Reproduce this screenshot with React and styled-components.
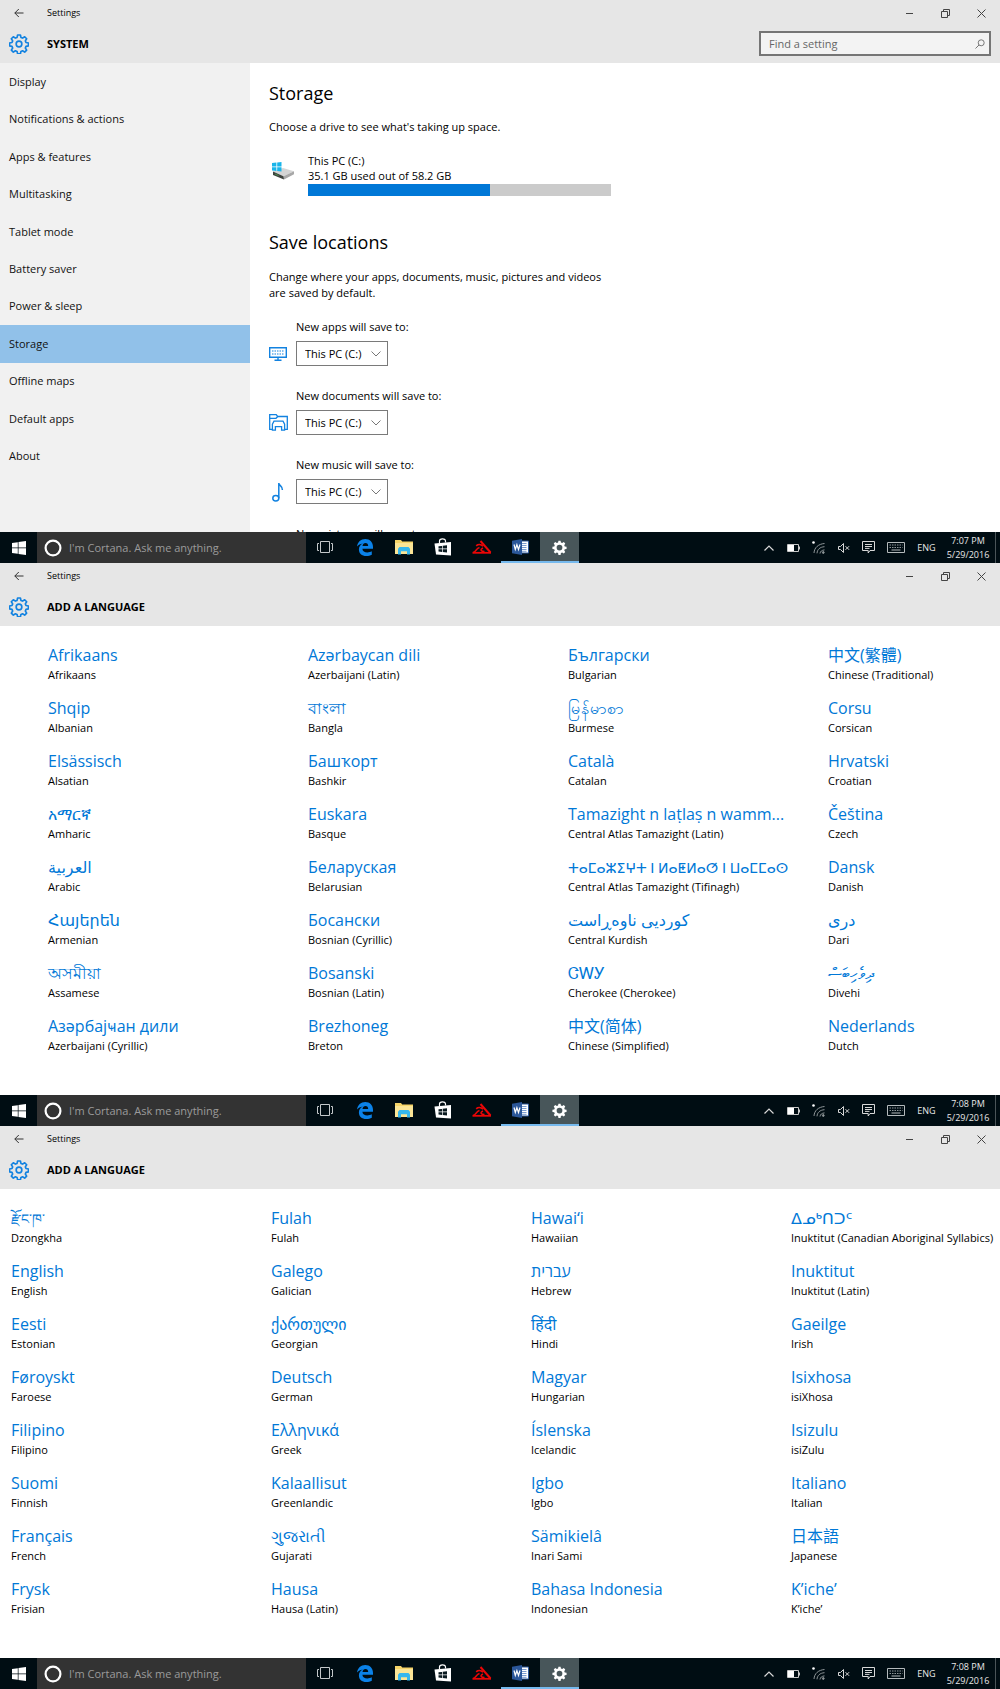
import React from "react";
import styled, { createGlobalStyle } from "styled-components";

const GlobalStyle = createGlobalStyle`
  * {
    box-sizing: border-box;
  }
  body {
    margin: 0;
    font-family: "Open Sans", "Noto Sans", "DejaVu Sans", "Noto Sans CJK SC", sans-serif;
    font-size: 11px;
    line-height: 16px;
    color: #000;
    background: #fff;
  }
  button, input, select {
    font: inherit;
    color: inherit;
    border: none;
    border-radius: 0;
    background: none;
    padding: 0;
    margin: 0;
  }
  svg {
    display: block;
    flex: none;
  }
`;

const Page = styled.div`
  display: grid;
  grid-template-rows: repeat(3, minmax(0, 1fr));
  height: 100vh;
  min-height: 1500px;
`;
const Screen = styled.section`
  display: flex;
  flex-direction: column;
  min-height: 0;
  overflow: hidden;
`;
const Header = styled.header`
  flex: none;
  background: #e6e6e6;
`;
const TitleBar = styled.div`
  display: flex;
  align-items: center;
  height: 26px;
  padding-right: 1px;
  font-size: 9px;
`;
const BackButton = styled.button`
  display: flex;
  justify-content: center;
  width: 37px;
  margin-right: 10px;
`;
const WindowButtons = styled.div`
  display: flex;
  margin-left: auto;
`;
const WindowButton = styled.button`
  display: flex;
  justify-content: center;
  align-items: center;
  width: 36px;
  height: 26px;
`;
const SectionBar = styled.div`
  display: flex;
  align-items: center;
  height: 37px;
  padding: 0 9px 2px;
`;
const SectionTitle = styled.h1`
  margin: 0 0 0 18px;
  font-size: 11px;
  font-weight: 700;
  color: #000;
`;
const SearchBox = styled.label`
  display: flex;
  align-items: center;
  width: 232px;
  height: 25px;
  margin-left: auto;
  padding: 0 4px 0 8px;
  border: 2px solid #757575;
  background: #f3f3f3;
`;
const SearchInput = styled.input`
  flex: 1;
  min-width: 0;
  outline: none;
  &::placeholder {
    color: #666;
    opacity: 1;
  }
`;
const Body = styled.div`
  display: flex;
  flex: 1;
  min-height: 0;
  overflow: hidden;
`;
const Sidebar = styled.nav`
  width: 25%;
  background: #f1f1f1;
`;
const NavList = styled.ul`
  display: grid;
  grid-auto-rows: 1fr;
  height: 412px;
  margin: 0;
  padding: 0;
  list-style: none;
`;
const NavLink = styled.a`
  display: flex;
  align-items: center;
  height: 100%;
  padding: 0 9px;
  color: #111;
  text-decoration: none;
  background: ${(props) => (props.$active ? "#91c1e9" : "transparent")};
`;
const Content = styled.main`
  flex: 1;
  padding: 16px 19px 0;
`;
const Heading = styled.h2`
  margin: 0;
  font-size: 18px;
  font-weight: 400;
  line-height: 28px;
`;
const Intro = styled.p`
  max-width: 350px;
  margin: ${(props) => (props.$wide ? "13px 0 18px" : "12px 0 18px")};
`;
const Drive = styled.div`
  display: flex;
  gap: 14px;
  margin-bottom: 32px;
  padding-left: 3px;
  line-height: 15px;
`;
const DriveIcon = styled.div`
  padding-top: 8px;
`;
const DriveInfo = styled.div`
  flex: 1;
  max-width: 303px;
`;
const Meter = styled.div`
  height: 12px;
  margin-top: 1px;
  background: #cbcbcb;
`;
const MeterFill = styled.div`
  height: 100%;
  background: #0078d7;
`;
const Field = styled.div`
  display: grid;
  grid-template-columns: 27px auto;
  justify-content: start;
  align-items: center;
  row-gap: 6px;
  margin-bottom: 22px;
`;
const FieldLabel = styled.label`
  grid-column: 2;
`;
const SelectWrap = styled.div`
  display: grid;
  align-items: center;
  width: 92px;
  svg {
    grid-area: 1 / 1;
    justify-self: end;
    margin-right: 7px;
    pointer-events: none;
  }
`;
const Select = styled.select`
  grid-area: 1 / 1;
  appearance: none;
  width: 100%;
  height: 25px;
  padding: 0 20px 0 8px;
  border: 1px solid #7a7a7a;
  background: #fff;
`;
const Languages = styled.main`
  flex: 1;
  min-height: 0;
  overflow: hidden;
  padding: 18px 0 0 ${(props) => props.$inset}px;
`;
const LanguageGrid = styled.div`
  display: grid;
  grid-template-columns: repeat(4, 26vw);
  grid-template-rows: repeat(8, 39px);
  grid-auto-flow: column;
  row-gap: 14px;
`;
const Language = styled.a`
  color: #000;
  text-decoration: none;
  white-space: nowrap;
`;
const NativeName = styled.div`
  height: 23px;
  font-size: ${(props) => (props.$wideScript ? 14 : 16)}px;
  line-height: 23px;
  color: #0078d7;
`;
const Taskbar = styled.footer`
  display: flex;
  flex: none;
  height: 31px;
  background: #000d13;
  color: #e8e8e8;
`;
const StartButton = styled.button`
  display: flex;
  justify-content: center;
  align-items: center;
  width: 37px;
`;
const Cortana = styled.label`
  display: flex;
  align-items: center;
  gap: 7px;
  width: 269px;
  padding-left: 7px;
  background: #333;
`;
const CortanaInput = styled.input`
  flex: 1;
  min-width: 0;
  outline: none;
  &::placeholder {
    color: #9b9b9b;
    opacity: 1;
  }
`;
const TaskButton = styled.button`
  display: flex;
  justify-content: center;
  align-items: center;
  width: 39px;
  border-bottom: 2px solid ${(props) => (props.$open ? "#76b9ed" : "transparent")};
  padding-top: 1px;
  background: ${(props) => (props.$active ? "#48565a" : "none")};
`;
const Tray = styled.div`
  display: flex;
  margin-left: auto;
`;
const TrayButton = styled.button`
  display: flex;
  justify-content: center;
  align-items: center;
  width: ${(props) => props.$width || 25}px;
  font-size: 9px;
`;
const Clock = styled.time`
  width: 52px;
  padding-top: 2px;
  font-size: 9px;
  line-height: 14px;
  text-align: center;
`;
const ShowDesktop = styled.button`
  width: 5px;
  margin-left: 1px;
  border-left: 1px solid #4a5458;
`;

// ---- icons ----

const GEAR =
  "M10.3 1.2h3.4l.6 2.9 2 .8 2.5-1.6 2.4 2.4-1.6 2.5.8 2 2.9.6v3.4l-2.9.6-.8 2 1.6 2.5-2.4 2.4-2.5-1.6-2 .8-.6 2.9h-3.4l-.6-2.9-2-.8-2.5 1.6-2.4-2.4 1.6-2.5-.8-2-2.9-.6v-3.4l2.9-.6.8-2L2.8 5.7l2.4-2.4 2.5 1.6 2-.8z";

const GearOutline = () => (
  <svg width="20" height="20" viewBox="0 0 24 24" fill="none" stroke="#1282e0" strokeWidth="2" strokeLinejoin="round">
    <path d={GEAR} />
    <circle cx="12" cy="12" r="3.4" />
  </svg>
);

const GearSolid = () => (
  <svg width="15" height="15" viewBox="0 0 24 24" fill="#fff">
    <path fillRule="evenodd" d={GEAR + "M12 7.4a4.6 4.6 0 1 0 0 9.2 4.6 4.6 0 0 0 0-9.2z"} />
  </svg>
);

const BackIcon = () => (
  <svg width="10" height="10" viewBox="0 0 10 10" fill="none" stroke="#333">
    <path d="M9.5 5H.8M4.8 1 .8 5l4 4" />
  </svg>
);

const MinimizeIcon = () => (
  <svg width="9" height="9" viewBox="0 0 9 9" fill="none" stroke="#444">
    <path d="M1 4.5h7" />
  </svg>
);

const RestoreIcon = () => (
  <svg width="9" height="9" viewBox="0 0 9 9" fill="none" stroke="#444">
    <path d="M.5 2.5h6v6h-6zM2.5 2.5v-2h6v6h-2" />
  </svg>
);

const CloseIcon = () => (
  <svg width="9" height="9" viewBox="0 0 9 9" fill="none" stroke="#444">
    <path d="M.5.5l8 8M8.5.5l-8 8" />
  </svg>
);

const SearchIcon = () => (
  <svg width="10" height="10" viewBox="0 0 10 10" fill="none" stroke="#777">
    <circle cx="6.2" cy="3.8" r="3" />
    <path d="M4 6 .5 9.5" />
  </svg>
);

const ChevronIcon = () => (
  <svg width="10" height="6" viewBox="0 0 10 6" fill="none" stroke="#777">
    <path d="M.5.5 5 5 9.5.5" />
  </svg>
);

const DriveGlyph = () => (
  <svg width="22" height="20" viewBox="0 0 22 20">
    <path d="M1 10.5 11 7l11 3.2-10.5 5z" fill="#d5d5d5" />
    <path d="M11.5 15.2 22 10.2v3L12 18.5z" fill="#a8a8a8" />
    <path d="M1 10.5l10.5 4.7.5 3.3L1 14z" fill="#3d423e" />
    <path d="M3 13l3.6 1.6" stroke="#4c8a4c" />
    <path d="M0 2l4.4-.5v3.900H0zM5.200 1.400 9.500 1v4.400H5.200zM0 6.200h4.400v3.700L0 9.400zM5.200 6.200h4.300v4.200l-4.300-.5z" fill="#19b5ea" />
  </svg>
);

const AppsIcon = () => (
  <svg width="18" height="14" viewBox="0 0 18 14" fill="none" stroke="#1282e0">
    <path d="M.7.7h16.6v9.6H.7z" strokeWidth="1.4" />
    <path d="M3 4h12M3 7h12" strokeDasharray="1.5 1" strokeWidth="1.2" />
    <path d="M9 10.5v2.5M5.5 13.200h7" strokeWidth="1.4" />
  </svg>
);

const DocumentsIcon = () => (
  <svg width="19" height="17" viewBox="0 0 19 17" fill="none" stroke="#1282e0" strokeWidth="1.3">
    <path d="M3.200 15.300H.7V.7h6.500l1.500 1.800h9.600v12.800h-2.500" />
    <path d="M.7 4.300h6.300l1.700-1.800" />
    <path d="M3.400 16.200v-6l1.600-3h9l1.600 3v6h-3v-3.500H6.400v3.500z" />
  </svg>
);

const MusicIcon = () => (
  <svg width="18" height="20" viewBox="0 0 18 20" fill="none" stroke="#1282e0" strokeWidth="1.5">
    <ellipse cx="6.8" cy="16.3" rx="3" ry="2.700" />
    <path d="M9.800 16.300V1c0 2.600 4 3 3.600 7" />
  </svg>
);

const StartIcon = () => (
  <svg width="14" height="14" viewBox="0 0 14 14" fill="#fff">
    <path d="M0 2l5.800-.8v5.400H0zM6.500 1.100 14 0v6.600H6.500zM0 7.300h5.800v5.400L0 11.900zM6.500 7.300H14V14l-7.500-1.100z" />
  </svg>
);

const CortanaIcon = () => (
  <svg width="18" height="18" viewBox="0 0 18 18" fill="none" stroke="#fff" strokeWidth="2.200">
    <circle cx="9" cy="9" r="7.400" />
  </svg>
);

const TaskViewIcon = () => (
  <svg width="17" height="12" viewBox="0 0 17 12" fill="none" stroke="#c4c8ca">
    <path d="M3.500.5h9v11h-9zM2 2.500H.5v7H2M14 2.500h1.500v7H14" />
  </svg>
);

const EdgeIcon = () => (
  <svg width="16" height="17" viewBox="0 0 16 17" fill="#0b82e8">
    <path d="M0 7.600C.6 3 3.800 0 8.300 0 13 0 16 3.400 16 8v1.700H5.400c.1 2.500 2.300 3.700 4.900 3.700 1.700 0 3.300-.5 4.500-1.200v3.500c-1.500.8-3.300 1.300-5.400 1.300-4.800 0-7.500-2.800-7.500-6.600 0-2.700 1.400-4.900 3.900-6C3.300 4.800 1.300 5.900 0 7.600zM5.500 6.900h5.700c0-1.900-1-3-2.700-3-1.600 0-2.700 1.100-3 3z" />
  </svg>
);

const FolderIcon = () => (
  <svg width="18" height="16" viewBox="0 0 18 16">
    <path d="M0 1h6l1.200 1.500H18V15H0z" fill="#f5d469" />
    <path d="M0 4h18v11H0z" fill="#fbe596" />
    <path d="M3 15.500V9.800L4.500 8h9L15 9.800v5.700h-3v-3.300H6v3.300z" fill="#36b7ee" />
  </svg>
);

const StoreIcon = () => (
  <svg width="18" height="18" viewBox="0 0 18 18">
    <path d="M5.500 5V3c0-2.600 6-3 6 0v1.500" fill="none" stroke="#fff" strokeWidth="1.200" />
    <path d="M.5 5.500 17 4v13.500L2 16.500z" fill="#fff" />
    <path d="M4.500 8.300 8 7.900v2.600H4.500zM8.700 7.800l4.300-.5v3.200H8.700zM4.500 11.200H8v2.700l-3.500-.3zM8.700 11.200H13v3.200l-4.300-.4z" fill="#0a1a20" />
  </svg>
);

const TriangleIcon = () => (
  <svg width="20" height="14" viewBox="0 0 20 14" fill="none" stroke="#ec0606">
    <path d="M8.500 1 18.500 12.500" strokeWidth="2" />
    <path d="M.5 12.800h18.500" strokeWidth="1.800" />
    <path d="M4.200 5.800C6 4.200 9 4 11 6.200" strokeWidth="1.700" />
    <path d="M1 12.500C4 12 4 8.500 7.500 7.500M12.500 11.500C9 11.500 7.500 9.500 11 8" strokeWidth="1.500" />
  </svg>
);

const WordIcon = () => (
  <svg width="17" height="16" viewBox="0 0 17 16">
    <path d="M8 2h8.500v12H8z" fill="#fff" stroke="#2b579a" />
    <path d="M9.500 4.500h5M9.500 6.500h5M9.500 8.500h5M9.500 10.500h5M9.500 12.300h5" stroke="#5b83c4" strokeWidth=".8" />
    <path d="M0 1.800 10 0v16L0 14.200z" fill="#2b579a" />
    <path d="M2 5.500l1.300 5 1.600-4.800 1.600 4.800L8 5.500" fill="none" stroke="#fff" strokeWidth="1.200" />
  </svg>
);

const UpIcon = () => (
  <svg width="10" height="6" viewBox="0 0 10 6" fill="none" stroke="#d8d8d8" strokeWidth="1.200">
    <path d="M.5 5.500 5 1l4.500 4.500" />
  </svg>
);

const BatteryIcon = () => (
  <svg width="13" height="8" viewBox="0 0 13 8" fill="none" stroke="#c8c8c8">
    <path d="M.5.5h11v7H.5zM12.500 2.500v3" />
    <path d="M1 1h6v6H1z" fill="#fff" stroke="none" />
  </svg>
);

const WifiIcon = () => (
  <svg width="13" height="13" viewBox="0 0 13 13" fill="none" stroke="#8f9699">
    <path d="M2 12C2.300 6.500 6.500 3 12.500 2.500M5 12.300c.2-3.800 3-6.300 7.500-6.600M8 12.500c.2-2 1.800-3.400 4.500-3.600" />
    <circle cx="11.300" cy="11.500" r=".9" fill="#8f9699" />
    <circle cx="1.500" cy="1.500" r="1.300" fill="#fff" stroke="none" />
  </svg>
);

const MuteIcon = () => (
  <svg width="12" height="10" viewBox="0 0 12 10" fill="none" stroke="#d8d8d8">
    <path d="M.5 3.500h2l3-3v9l-3-3h-2zM7.500 3.200l3.600 3.600M11.100 3.200 7.500 6.800" />
  </svg>
);

const ActionIcon = () => (
  <svg width="13" height="13" viewBox="0 0 13 13" fill="none" stroke="#d8d8d8">
    <path d="M.5.500h12v9h-4.500l-1.800 2.500V9.500H.5zM3 3.500h7M3 5.500h7M3 7.400h4.500" />
  </svg>
);

const KeyboardIcon = () => (
  <svg width="18" height="11" viewBox="0 0 18 11" fill="none" stroke="#b4babc">
    <path d="M.5.500h17v10H.5z" />
    <path d="M2.500 3h13M2.500 5.500h13" strokeDasharray="1.500 1" strokeWidth=".8" />
    <path d="M4.500 8h9" />
  </svg>
);

// ---- data ----

const navItems = [
  "Display",
  "Notifications & actions",
  "Apps & features",
  "Multitasking",
  "Tablet mode",
  "Battery saver",
  "Power & sleep",
  "Storage",
  "Offline maps",
  "Default apps",
  "About",
];

const saveLocations = [
  { id: "apps", label: "New apps will save to:", icon: <AppsIcon /> },
  { id: "documents", label: "New documents will save to:", icon: <DocumentsIcon /> },
  { id: "music", label: "New music will save to:", icon: <MusicIcon /> },
  { id: "pictures", label: "New pictures will save to:", icon: null },
];

const languagesAToD = [
  ["Afrikaans", "Afrikaans"],
  ["Shqip", "Albanian"],
  ["Elsässisch", "Alsatian"],
  ["አማርኛ", "Amharic"],
  ["العربية", "Arabic"],
  ["Հայերեն", "Armenian"],
  ["অসমীয়া", "Assamese"],
  ["Азәрбајҹан дили", "Azerbaijani (Cyrillic)"],
  ["Azərbaycan dili", "Azerbaijani (Latin)"],
  ["বাংলা", "Bangla"],
  ["Башҡорт", "Bashkir"],
  ["Euskara", "Basque"],
  ["Беларуская", "Belarusian"],
  ["Босански", "Bosnian (Cyrillic)"],
  ["Bosanski", "Bosnian (Latin)"],
  ["Brezhoneg", "Breton"],
  ["Български", "Bulgarian"],
  ["မြန်မာစာ", "Burmese"],
  ["Català", "Catalan"],
  ["Tamazight n laṭlaṣ n wamm...", "Central Atlas Tamazight (Latin)"],
  ["ⵜⴰⵎⴰⵣⵉⵖⵜ ⵏ ⵍⴰⵟⵍⴰⵚ ⵏ ⵡⴰⵎⵎⴰⵙ", "Central Atlas Tamazight (Tifinagh)", true],
  ["کوردیی ناوەڕاست", "Central Kurdish"],
  ["ᏣᎳᎩ", "Cherokee (Cherokee)"],
  ["中文(简体)", "Chinese (Simplified)"],
  ["中文(繁體)", "Chinese (Traditional)"],
  ["Corsu", "Corsican"],
  ["Hrvatski", "Croatian"],
  ["Čeština", "Czech"],
  ["Dansk", "Danish"],
  ["دری", "Dari"],
  ["ދިވެހިބަސް", "Divehi"],
  ["Nederlands", "Dutch"],
];

const languagesDToK = [
  ["རྫོང་ཁ་", "Dzongkha", true],
  ["English", "English"],
  ["Eesti", "Estonian"],
  ["Føroyskt", "Faroese"],
  ["Filipino", "Filipino"],
  ["Suomi", "Finnish"],
  ["Français", "French"],
  ["Frysk", "Frisian"],
  ["Fulah", "Fulah"],
  ["Galego", "Galician"],
  ["ქართული", "Georgian"],
  ["Deutsch", "German"],
  ["Ελληνικά", "Greek"],
  ["Kalaallisut", "Greenlandic"],
  ["ગુજરાતી", "Gujarati"],
  ["Hausa", "Hausa (Latin)"],
  ["Hawaiʻi", "Hawaiian"],
  ["עברית", "Hebrew"],
  ["हिंदी", "Hindi"],
  ["Magyar", "Hungarian"],
  ["Íslenska", "Icelandic"],
  ["Igbo", "Igbo"],
  ["Sämikielâ", "Inari Sami"],
  ["Bahasa Indonesia", "Indonesian"],
  ["ᐃᓄᒃᑎᑐᑦ", "Inuktitut (Canadian Aboriginal Syllabics)"],
  ["Inuktitut", "Inuktitut (Latin)"],
  ["Gaeilge", "Irish"],
  ["Isixhosa", "isiXhosa"],
  ["Isizulu", "isiZulu"],
  ["Italiano", "Italian"],
  ["日本語", "Japanese"],
  ["K’iche’", "K’iche’"],
];

const SettingsHeader = ({ title, search }) => {
  return (
    <Header>
      <TitleBar>
        <BackButton aria-label="Back">
          <BackIcon />
        </BackButton>
        Settings
        <WindowButtons>
          <WindowButton aria-label="Minimize">
            <MinimizeIcon />
          </WindowButton>
          <WindowButton aria-label="Restore">
            <RestoreIcon />
          </WindowButton>
          <WindowButton aria-label="Close">
            <CloseIcon />
          </WindowButton>
        </WindowButtons>
      </TitleBar>
      <SectionBar>
        <GearOutline />
        <SectionTitle>{title}</SectionTitle>
        {search && (
          <SearchBox>
            <SearchInput type="text" placeholder="Find a setting" aria-label="Find a setting" />
            <SearchIcon />
          </SearchBox>
        )}
      </SectionBar>
    </Header>
  );
};

const WindowsTaskbar = ({ time }) => {
  return (
    <Taskbar>
      <StartButton aria-label="Start">
        <StartIcon />
      </StartButton>
      <Cortana>
        <CortanaIcon />
        <CortanaInput type="text" placeholder="I'm Cortana. Ask me anything." aria-label="Ask Cortana" />
      </Cortana>
      <TaskButton aria-label="Task view">
        <TaskViewIcon />
      </TaskButton>
      <TaskButton aria-label="Edge">
        <EdgeIcon />
      </TaskButton>
      <TaskButton aria-label="File Explorer">
        <FolderIcon />
      </TaskButton>
      <TaskButton aria-label="Store">
        <StoreIcon />
      </TaskButton>
      <TaskButton aria-label="Reader">
        <TriangleIcon />
      </TaskButton>
      <TaskButton aria-label="Word" $open>
        <WordIcon />
      </TaskButton>
      <TaskButton aria-label="Settings" $open $active>
        <GearSolid />
      </TaskButton>
      <Tray>
        <TrayButton aria-label="Show hidden icons">
          <UpIcon />
        </TrayButton>
        <TrayButton aria-label="Battery">
          <BatteryIcon />
        </TrayButton>
        <TrayButton aria-label="Network">
          <WifiIcon />
        </TrayButton>
        <TrayButton aria-label="Volume">
          <MuteIcon />
        </TrayButton>
        <TrayButton aria-label="Action center">
          <ActionIcon />
        </TrayButton>
        <TrayButton aria-label="Touch keyboard" $width={30}>
          <KeyboardIcon />
        </TrayButton>
        <TrayButton $width={31}>ENG</TrayButton>
        <Clock>
          {time}
          <br />
          5/29/2016
        </Clock>
        <ShowDesktop aria-label="Show desktop" />
      </Tray>
    </Taskbar>
  );
};

const StorageScreen = () => {
  return (
    <Screen>
      <SettingsHeader title="SYSTEM" search />
      <Body>
        <Sidebar>
          <NavList>
            {navItems.map((item) => (
              <li key={item}>
                <NavLink href="#" $active={item === "Storage"}>
                  {item}
                </NavLink>
              </li>
            ))}
          </NavList>
        </Sidebar>
        <Content>
          <Heading>Storage</Heading>
          <Intro>Choose a drive to see what's taking up space.</Intro>
          <Drive>
            <DriveIcon>
              <DriveGlyph />
            </DriveIcon>
            <DriveInfo>
              <div>This PC (C:)</div>
              <div>35.1 GB used out of 58.2 GB</div>
              <Meter>
                <MeterFill style={{ width: `${Math.round((35.1 / 58.2) * 100)}%` }} />
              </Meter>
            </DriveInfo>
          </Drive>
          <Heading>Save locations</Heading>
          <Intro $wide>
            Change where your apps, documents, music, pictures and videos are saved by default.
          </Intro>
          {saveLocations.map((location) => (
            <Field key={location.id}>
              <FieldLabel htmlFor={location.id}>{location.label}</FieldLabel>
              <div>{location.icon}</div>
              <SelectWrap>
                <Select id={location.id}>
                  <option>This PC (C:)</option>
                </Select>
                <ChevronIcon />
              </SelectWrap>
            </Field>
          ))}
        </Content>
      </Body>
      <WindowsTaskbar time="7:07 PM" />
    </Screen>
  );
};

const LanguageScreen = ({ languages, inset }) => {
  return (
    <Screen>
      <SettingsHeader title="ADD A LANGUAGE" />
      <Languages $inset={inset}>
        <LanguageGrid>
          {languages.map(([native, english, wideScript]) => (
            <Language href="#" key={english}>
              <NativeName $wideScript={wideScript}>{native}</NativeName>
              {english}
            </Language>
          ))}
        </LanguageGrid>
      </Languages>
      <WindowsTaskbar time="7:08 PM" />
    </Screen>
  );
};

const App = () => {
  return (
    <Page>
      <GlobalStyle />
      <StorageScreen />
      <LanguageScreen languages={languagesAToD} inset={48} />
      <LanguageScreen languages={languagesDToK} inset={11} />
    </Page>
  );
};

export default App;
